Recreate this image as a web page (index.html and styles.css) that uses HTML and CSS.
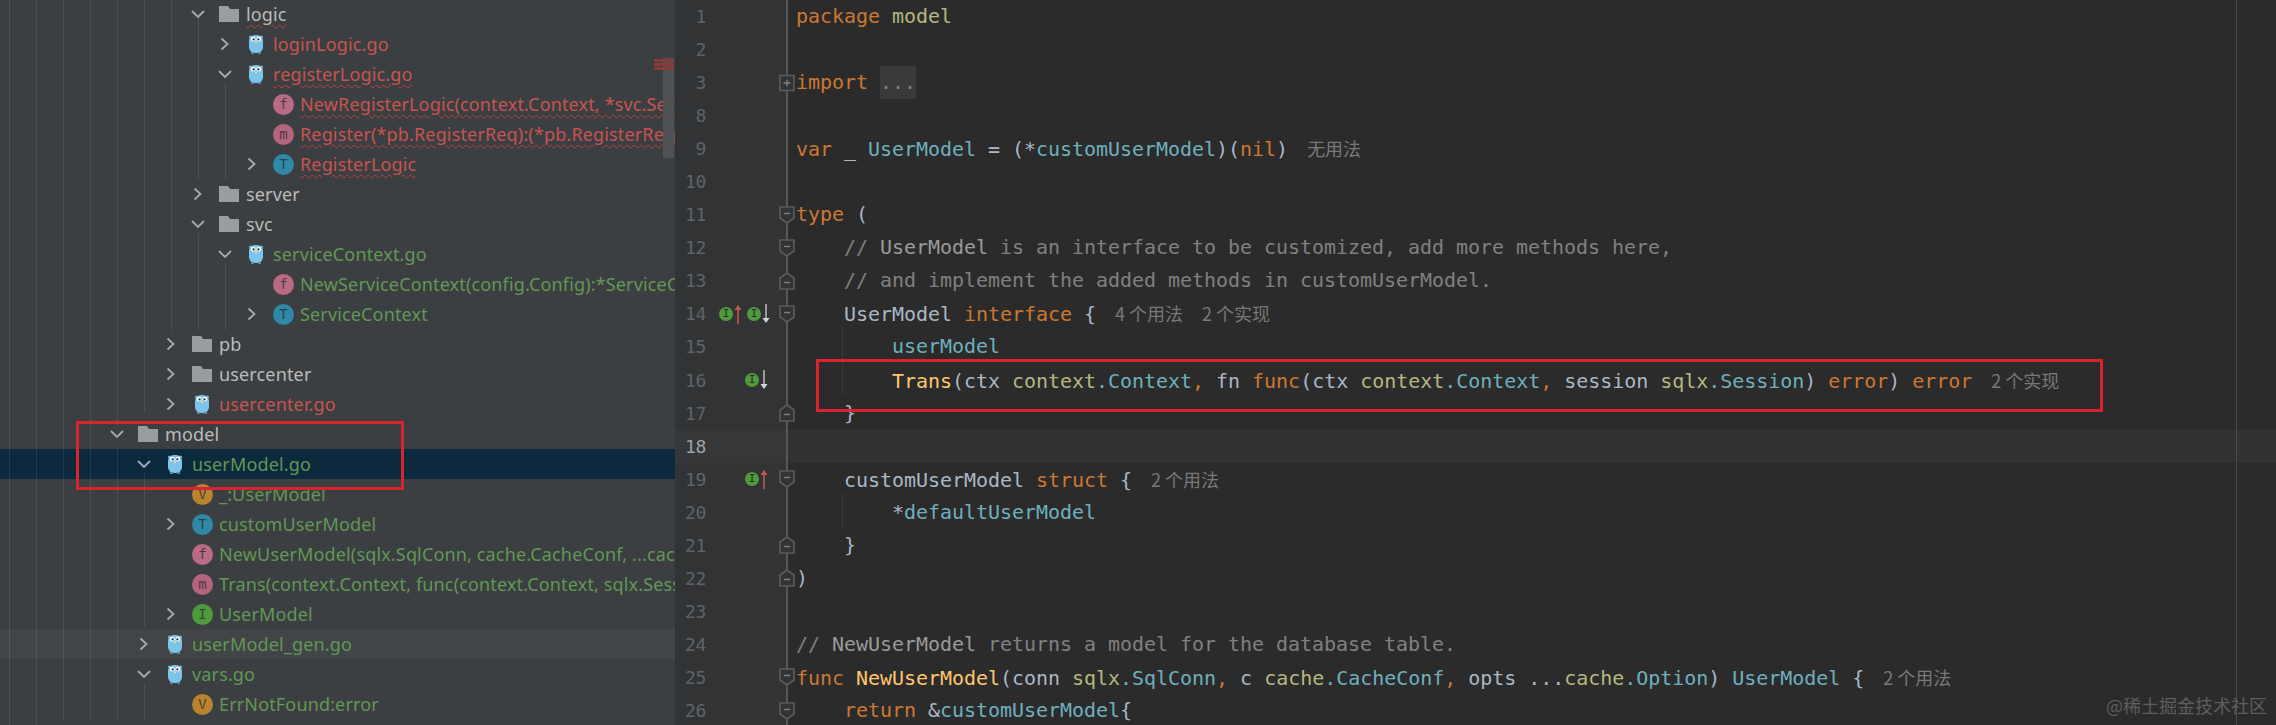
FILE: index.html
```html
<!DOCTYPE html>
<html lang="zh">
<head>
<meta charset="utf-8">
<title>userModel.go</title>
<link rel="stylesheet" href="styles.css">
</head>
<body>
<svg class="defs" width="0" height="0" aria-hidden="true">
  <symbol id="right" viewBox="0 0 16 16"><path d="M4.5 2.5 L10.5 8 L4.5 13.5" fill="none" stroke="#a8aaac" stroke-width="1.8"/></symbol>
  <symbol id="down" viewBox="0 0 16 16"><path d="M2 5 L8 11 L14 5" fill="none" stroke="#a8aaac" stroke-width="1.8"/></symbol>
  <symbol id="folder" viewBox="0 0 20 16"><path d="M0 0 H9 L11 3 H20 V16 H0 Z" fill="#9a9d9f"/></symbol>
  <symbol id="gopher" viewBox="0 0 16 20">
    <circle cx="2.5" cy="3" r="1.6" fill="#6fb6dc"/><circle cx="13.5" cy="3" r="1.6" fill="#6fb6dc"/>
    <rect x="1" y="1" width="14" height="18" rx="6" fill="#7cc4ea"/>
    <rect x="3" y="18" width="3" height="2" fill="#5a8aa5"/><rect x="10" y="18" width="3" height="2" fill="#5a8aa5"/>
    <circle cx="5.2" cy="5.2" r="2.4" fill="#fff"/><circle cx="10.8" cy="5.2" r="2.4" fill="#fff"/>
    <circle cx="5.6" cy="5.4" r="1.1" fill="#2b2b2b"/><circle cx="10.4" cy="5.4" r="1.1" fill="#2b2b2b"/>
    <rect x="7" y="7.5" width="2" height="1.6" fill="#e8dcc0"/>
  </symbol>
  <symbol id="fs" viewBox="0 0 16 18"><path d="M1 1 H15 V12 L8 17 L1 12 Z" fill="#313335" stroke="#5a5c5e" stroke-width="1.6"/><path d="M5 7.5 H11" stroke="#808284" stroke-width="1.4"/></symbol>
  <symbol id="fe" viewBox="0 0 16 18"><path d="M1 17 H15 V6 L8 1 L1 6 Z" fill="#313335" stroke="#5a5c5e" stroke-width="1.6"/><path d="M5 10.5 H11" stroke="#808284" stroke-width="1.4"/></symbol>
  <symbol id="fp" viewBox="0 0 16 18"><path d="M1 1.5 H15 V16.5 H1 Z" fill="#313335" stroke="#5a5c5e" stroke-width="1.6"/><path d="M4.5 9 H11.5 M8 5.5 V12.5" stroke="#808284" stroke-width="1.4"/></symbol>
  <symbol id="up" viewBox="0 0 8 20"><path d="M4 20 V3" stroke="#c75450" stroke-width="1.6"/><path d="M0.5 6 L4 1 L7.5 6 Z" fill="#c75450"/></symbol>
  <symbol id="dn" viewBox="0 0 8 20"><path d="M4 0 V17" stroke="#b4b6b8" stroke-width="1.6"/><path d="M0.5 14 L4 19 L7.5 14 Z" fill="#d4d6d8"/></symbol>
</svg>

<main class="ide">
  <aside class="tree">
    <div class="row l3"><span class="chev"><svg><use href="#down"/></svg></span><svg class="ic-folder"><use href="#folder"/></svg><span class="name plain err-line">logic</span></div>
    <div class="row l4"><span class="chev"><svg><use href="#right"/></svg></span><svg class="ic-go"><use href="#gopher"/></svg><span class="name err">loginLogic.go</span></div>
    <div class="row l4"><span class="chev"><svg><use href="#down"/></svg></span><svg class="ic-go"><use href="#gopher"/></svg><span class="name err err-line">registerLogic.go</span></div>
    <div class="row l5"><span class="chev"></span><span class="badge b-f">f</span><span class="name err err-line">NewRegisterLogic(context.Context, *svc.ServiceContext):*RegisterLogic</span></div>
    <div class="row l5"><span class="chev"></span><span class="badge b-m">m</span><span class="name err err-line">Register(*pb.RegisterReq):(*pb.RegisterResp, error)</span></div>
    <div class="row l5"><span class="chev"><svg><use href="#right"/></svg></span><span class="badge b-t">T</span><span class="name err err-line">RegisterLogic</span></div>
    <div class="row l3"><span class="chev"><svg><use href="#right"/></svg></span><svg class="ic-folder"><use href="#folder"/></svg><span class="name plain">server</span></div>
    <div class="row l3"><span class="chev"><svg><use href="#down"/></svg></span><svg class="ic-folder"><use href="#folder"/></svg><span class="name plain">svc</span></div>
    <div class="row l4"><span class="chev"><svg><use href="#down"/></svg></span><svg class="ic-go"><use href="#gopher"/></svg><span class="name new">serviceContext.go</span></div>
    <div class="row l5"><span class="chev"></span><span class="badge b-f">f</span><span class="name new">NewServiceContext(config.Config):*ServiceContext</span></div>
    <div class="row l5"><span class="chev"><svg><use href="#right"/></svg></span><span class="badge b-t">T</span><span class="name new">ServiceContext</span></div>
    <div class="row l2"><span class="chev"><svg><use href="#right"/></svg></span><svg class="ic-folder"><use href="#folder"/></svg><span class="name plain">pb</span></div>
    <div class="row l2"><span class="chev"><svg><use href="#right"/></svg></span><svg class="ic-folder"><use href="#folder"/></svg><span class="name plain">usercenter</span></div>
    <div class="row l2"><span class="chev"><svg><use href="#right"/></svg></span><svg class="ic-go"><use href="#gopher"/></svg><span class="name err">usercenter.go</span></div>
    <div class="row l0"><span class="chev"><svg><use href="#down"/></svg></span><svg class="ic-folder"><use href="#folder"/></svg><span class="name plain">model</span></div>
    <div class="row l1 selected"><span class="chev"><svg><use href="#down"/></svg></span><svg class="ic-go"><use href="#gopher"/></svg><span class="name new">userModel.go</span></div>
    <div class="row l2"><span class="chev"></span><span class="badge b-v">V</span><span class="name new">_:UserModel</span></div>
    <div class="row l2"><span class="chev"><svg><use href="#right"/></svg></span><span class="badge b-t">T</span><span class="name new">customUserModel</span></div>
    <div class="row l2"><span class="chev"></span><span class="badge b-f">f</span><span class="name new">NewUserModel(sqlx.SqlConn, cache.CacheConf, ...cache.Option):UserModel</span></div>
    <div class="row l2"><span class="chev"></span><span class="badge b-m">m</span><span class="name new">Trans(context.Context, func(context.Context, sqlx.Session) error):error</span></div>
    <div class="row l2"><span class="chev"><svg><use href="#right"/></svg></span><span class="badge b-i">I</span><span class="name new">UserModel</span></div>
    <div class="row l1 hover"><span class="chev"><svg><use href="#right"/></svg></span><svg class="ic-go"><use href="#gopher"/></svg><span class="name new">userModel_gen.go</span></div>
    <div class="row l1"><span class="chev"><svg><use href="#down"/></svg></span><svg class="ic-go"><use href="#gopher"/></svg><span class="name new">vars.go</span></div>
    <div class="row l2"><span class="chev"></span><span class="badge b-v">V</span><span class="name new">ErrNotFound:error</span></div>

    <svg class="guides" width="675" height="725" aria-hidden="true">
      <path d="M9.5 0V725M36.5 0V725M63.5 0V720M90.5 0V720M117.5 0V425M117.5 447V720M144.5 0V413M144.5 473V627M144.5 683V720M171.5 0V330M198.5 18V180M198.5 233V330M225.5 83V180M225.5 264V330"/>
    </svg>
    <div class="scrollbar">
      <span class="stripe"></span><span class="stripe"></span><span class="stripe"></span>
    </div>
  </aside>

  <section class="editor">
    <div class="line"><span class="num">1</span><span class="marks"></span><span class="fold"></span><code><b class="k">package</b> <b class="q">model</b></code></div>
    <div class="line"><span class="num">2</span><span class="marks"></span><span class="fold"></span><code></code></div>
    <div class="line"><span class="num">3</span><span class="marks"></span><span class="fold"><svg><use href="#fp"/></svg></span><code><b class="k">import</b> <span class="folded">...</span></code></div>
    <div class="line"><span class="num">8</span><span class="marks"></span><span class="fold"></span><code></code></div>
    <div class="line"><span class="num">9</span><span class="marks"></span><span class="fold"></span><code><b class="k">var</b> _ <b class="t">UserModel</b> = (*<b class="t">customUserModel</b>)(<b class="k">nil</b>)<span class="hint">无用法</span></code></div>
    <div class="line"><span class="num">10</span><span class="marks"></span><span class="fold"></span><code></code></div>
    <div class="line"><span class="num">11</span><span class="marks"></span><span class="fold"><svg><use href="#fs"/></svg></span><code><b class="k">type</b> (</code></div>
    <div class="line"><span class="num">12</span><span class="marks"></span><span class="fold"><svg><use href="#fs"/></svg></span><code class="c">    // <b class="cn">UserModel</b> is an interface to be customized, add more methods here,</code></div>
    <div class="line"><span class="num">13</span><span class="marks"></span><span class="fold"><svg><use href="#fe"/></svg></span><code class="c">    // and implement the added methods in customUserModel.</code></div>
    <div class="line"><span class="num">14</span><span class="marks"><span class="impl">I</span><svg class="arrow"><use href="#up"/></svg><span class="impl second">I</span><svg class="arrow"><use href="#dn"/></svg></span><span class="fold"><svg><use href="#fs"/></svg></span><code>    UserModel <b class="k">interface</b> {<span class="hint">4 个用法</span><span class="hint">2 个实现</span></code></div>
    <div class="line"><span class="num">15</span><span class="marks"></span><span class="fold"></span><code>        <b class="t">userModel</b></code></div>
    <div class="line"><span class="num">16</span><span class="marks end"><span class="impl">I</span><svg class="arrow"><use href="#dn"/></svg></span><span class="fold"></span><code>        <b class="f">Trans</b>(ctx <b class="q">context</b><b class="t">.Context</b><b class="k">,</b> fn <b class="k">func</b>(ctx <b class="q">context</b><b class="t">.Context</b><b class="k">,</b> session <b class="q">sqlx</b><b class="t">.Session</b>) <b class="k">error</b>) <b class="k">error</b><span class="hint">2 个实现</span></code></div>
    <div class="line"><span class="num">17</span><span class="marks"></span><span class="fold"><svg><use href="#fe"/></svg></span><code>    }</code></div>
    <div class="line current"><span class="num">18</span><span class="marks"></span><span class="fold"></span><code></code></div>
    <div class="line"><span class="num">19</span><span class="marks end"><span class="impl">I</span><svg class="arrow"><use href="#up"/></svg></span><span class="fold"><svg><use href="#fs"/></svg></span><code>    customUserModel <b class="k">struct</b> {<span class="hint">2 个用法</span></code></div>
    <div class="line"><span class="num">20</span><span class="marks"></span><span class="fold"></span><code>        *<b class="t">defaultUserModel</b></code></div>
    <div class="line"><span class="num">21</span><span class="marks"></span><span class="fold"><svg><use href="#fe"/></svg></span><code>    }</code></div>
    <div class="line"><span class="num">22</span><span class="marks"></span><span class="fold"><svg><use href="#fe"/></svg></span><code>)</code></div>
    <div class="line"><span class="num">23</span><span class="marks"></span><span class="fold"></span><code></code></div>
    <div class="line"><span class="num">24</span><span class="marks"></span><span class="fold"></span><code class="c">// <b class="cn">NewUserModel</b> returns a model for the database table.</code></div>
    <div class="line"><span class="num">25</span><span class="marks"></span><span class="fold"><svg><use href="#fs"/></svg></span><code><b class="k">func</b> <b class="f">NewUserModel</b>(conn <b class="q">sqlx</b><b class="t">.SqlConn</b><b class="k">,</b> c <b class="q">cache</b><b class="t">.CacheConf</b><b class="k">,</b> opts ...<b class="q">cache</b><b class="t">.Option</b>) <b class="t">UserModel</b> {<span class="hint">2 个用法</span></code></div>
    <div class="line"><span class="num">26</span><span class="marks"></span><span class="fold"><svg><use href="#fs"/></svg></span><code>    <b class="k">return</b> &amp;<b class="t">customUserModel</b>{</code></div>

    <span class="guide g1"></span>
    <span class="guide g2"></span>
    <span class="margin-line"></span>
  </section>

  <div class="redbox box-tree"></div>
  <div class="redbox box-code"></div>
  <div class="watermark">@稀土掘金技术社区</div>
</main>
</body>
</html>
```

FILE: styles.css
```css
* { box-sizing: border-box; }
html, body { margin: 0; padding: 0; background: #2b2b2b; }
.defs { position: absolute; }

.ide {
  position: relative;
  display: flex;
  width: 2276px;
  height: 725px;
  overflow: hidden;
}

/* project tree */
.tree {
  position: relative;
  flex: 0 0 675px;
  height: 725px;
  overflow: hidden;
  background: #3c3f41;
  font-family: "Noto Sans", sans-serif;
  font-size: 18px;
  letter-spacing: .15px;
}
.row {
  position: relative;
  display: flex;
  align-items: center;
  height: 30px;
  white-space: nowrap;
}
.row:first-child { margin-top: -1px; }
.l0 { padding-left: 109px; }
.l1 { padding-left: 136px; }
.l2 { padding-left: 163px; }
.l3 { padding-left: 190px; }
.l4 { padding-left: 217px; }
.l5 { padding-left: 244px; }
.selected { background: #0d293e; }
.hover { background: #424547; }

.chev { flex: 0 0 16px; height: 16px; margin-right: 13px; }
.chev svg { display: block; width: 16px; height: 16px; }
.ic-folder { flex: 0 0 20px; width: 20px; height: 16px; margin-right: 7px; }
.ic-go { flex: 0 0 16px; width: 16px; height: 20px; margin: 0 9px 0 2px; }

.badge {
  flex: 0 0 21px;
  width: 21px;
  height: 21px;
  margin-right: 6px;
  border-radius: 50%;
  font: 14px/21px "DejaVu Sans Mono", monospace;
  letter-spacing: 0;
  text-align: center;
  color: rgba(43, 43, 43, .75);
}
.b-f { background: #b96a85; }
.b-m { background: #b5647e; }
.b-t { background: #2f88a8; }
.b-v { background: #b9832f; }
.b-i { background: #4f9a3c; }

.name { line-height: 30px; }
.plain { color: #bbbbbb; }
.err { color: #c75450; }
.new { color: #629755; }
.err-line {
  text-decoration: underline wavy #bc3f3c 1px;
  text-underline-offset: 3px;
}

.guides { position: absolute; left: 0; top: 0; pointer-events: none; }
.guides path { fill: none; stroke: rgba(255, 255, 255, .09); stroke-width: 1; }

.scrollbar {
  position: absolute;
  right: 1px;
  top: 58px;
  width: 11px;
  height: 100px;
  background: #505355;
}
.stripe {
  display: block;
  width: 20px;
  height: 3px;
  margin: 1px 0 1px -9px;
  background: #8b3a3a;
}

/* editor */
.editor {
  position: relative;
  flex: 1;
  height: 725px;
  overflow: hidden;
  background: #2b2b2b;
}
.line {
  display: flex;
  height: 33.05px;
  font: 20px/33.05px "DejaVu Sans Mono", monospace;
  letter-spacing: -.04px;
  color: #a9b7c6;
  white-space: pre;
}
.num {
  flex: 0 0 31px;
  background: #313335;
  text-align: right;
  font-size: 18px;
  letter-spacing: -.3px;
  color: #606366;
}
.marks {
  position: relative;
  display: flex;
  align-items: center;
  flex: 0 0 72px;
  padding-left: 13px;
  background: #313335;
}
.marks.end { padding-left: 39px; }
.impl {
  flex: 0 0 14px;
  height: 14px;
  border-radius: 50%;
  background: #4f9a3c;
  font: 11px/14px "DejaVu Sans Mono", monospace;
  text-align: center;
  color: #2b2b2b;
}
.impl.second { margin-left: 5px; }
.arrow { flex: 0 0 8px; width: 8px; height: 20px; margin-left: 1px; }
.fold {
  display: flex;
  align-items: center;
  justify-content: center;
  flex: 0 0 18px;
  background: linear-gradient(to right, #313335 0 8px, #555759 8px 10px, #2b2b2b 10px);
}
.fold svg { width: 16px; height: 18px; }
.line code { flex: 1; font: inherit; }
.line b { font-weight: normal; }
.k { color: #cc7832; }
.t { color: #6fafbd; }
.q { color: #b5b77f; }
.f { color: #ffc66d; }
.c, .c b { color: #808080; }
.c .cn { color: #9a9a9a; }
.folded { background: #3a3a3a; color: #808080; display: inline-block; }
.hint {
  margin-left: 19px;
  font-family: "Noto Sans CJK SC", sans-serif;
  font-size: 18px;
  letter-spacing: 0;
  color: #787878;
}
.current { background: #323232; }
.current .num { background: #353739; color: #a4a3a3; }
.current .marks { background: #353739; }
.current .fold { background: linear-gradient(to right, #353739 0 8px, #555759 8px 10px, #323232 10px); }

.guide { position: absolute; left: 167px; width: 1px; background: #3b3b3b; }
.g1 { top: 328px; height: 67px; }
.g2 { top: 493px; height: 34px; }
.margin-line { position: absolute; left: 1561px; top: 0; width: 1px; height: 725px; background: #4a4a4a; }

/* annotations */
.redbox { position: absolute; border: 3px solid #d9232e; pointer-events: none; }
.box-tree { left: 76px; top: 421px; width: 328px; height: 69px; }
.box-code { left: 816px; top: 359px; width: 1287px; height: 53px; }
.watermark {
  position: absolute;
  right: 9px;
  top: 693px;
  font: 18px/24px "Noto Sans CJK SC", sans-serif;
  color: #5e5e5e;
}
```
